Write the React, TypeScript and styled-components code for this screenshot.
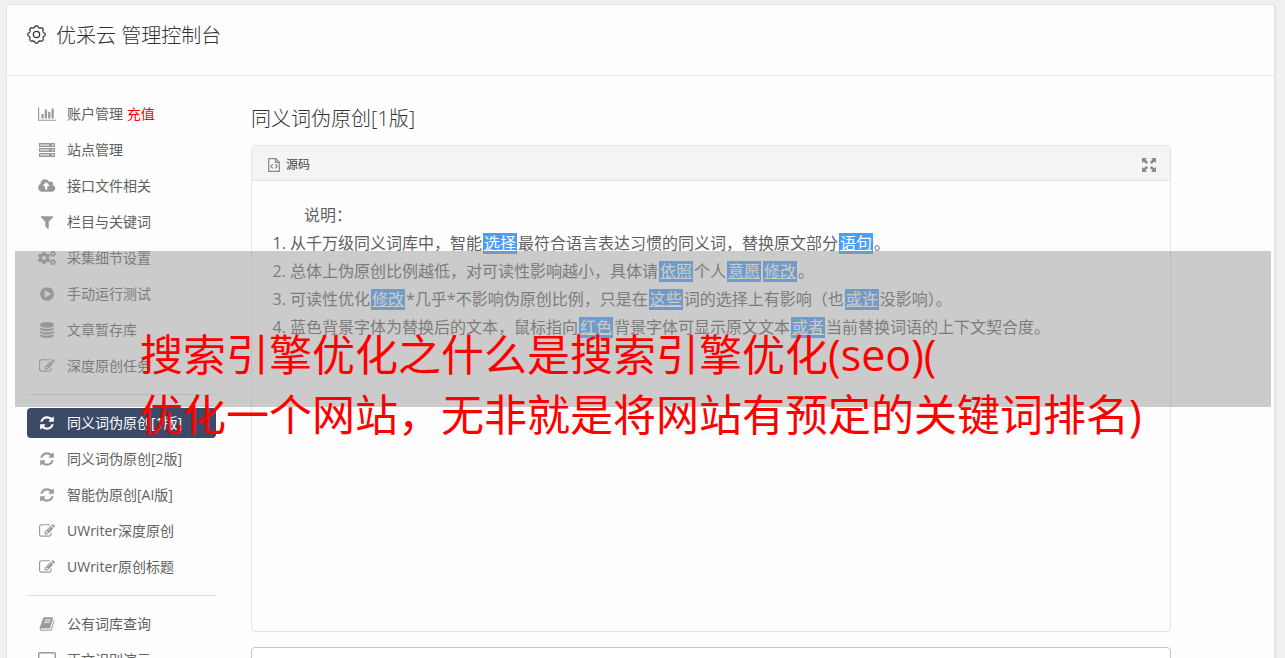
import React from "react";
import styled, { createGlobalStyle } from "styled-components";
import { FaCogs } from "react-icons/fa";

const GlobalStyle = createGlobalStyle`
  *, *::before, *::after { box-sizing: border-box; }
  body {
    margin: 0;
    background: #f0f0f0;
    color: #606060;
    font-family: "Open Sans", "Noto Sans CJK SC", sans-serif;
    font-size: 14px;
    font-weight: 400;
  }
`;

const Page = styled.div`
  position: relative;
  height: 100vh;
  padding: 4px 9px 0 6px;
  overflow: hidden;
`;

const Panel = styled.div`
  min-height: 100%;
  background: #fefefe;
  border: 1px solid #e4e4e4;
  border-right-width: 2px;
  border-radius: 4px 4px 0 0;
`;

const Header = styled.header`
  display: flex;
  align-items: center;
  gap: 10px;
  height: 71px;
  padding: 0 20px 12px;
  border-bottom: 1px solid #e4e4e4;
  color: #333;
`;

const Title = styled.h1`
  margin: 0;
  padding-top: 4px;
  font-size: 20px;
  line-height: 28px;
  font-weight: 300;
`;

const Columns = styled.div`
  display: flex;
  align-items: flex-start;
  padding: 23px 103px 0 20px;
`;

const Sidebar = styled.nav`
  flex: 0 0 189px;
  margin-right: 35px;
`;

const NavGroup = styled.ul`
  display: flex;
  flex-direction: column;
  gap: 6px;
  margin: 0;
  padding: 0;
  list-style: none;

  & + & {
    margin-top: 13px;
    padding-top: 13px;
    border-top: 1px solid #ddd;
  }
`;

const NavLink = styled.a<{ $active?: boolean }>`
  display: flex;
  align-items: center;
  gap: 10px;
  height: 30px;
  padding: 0 10px;
  border-radius: 4px;
  background: ${(p) => (p.$active ? "#3b4a66" : "transparent")};
  color: ${(p) => (p.$active ? "#fff" : "inherit")};
  text-decoration: none;
  white-space: nowrap;

  svg { color: ${(p) => (p.$active ? "#fff" : "#999")}; }
`;

const IconSlot = styled.span`
  display: flex;
  justify-content: center;
  flex: 0 0 20px;
`;

const NavLabel = styled.span`
  padding-bottom: 2px;
`;

const Recharge = styled.span`
  color: #f00;
`;

const Main = styled.main`
  flex: 1;
  min-width: 0;
`;

const SectionTitle = styled.h2`
  margin: 6px 0 12px;
  color: #333;
  font-size: 20px;
  line-height: 28px;
  font-weight: 300;
`;

const Editor = styled.section`
  height: 487px;
  border: 1px solid #e4e4e4;
  border-radius: 4px;
  overflow: hidden;
`;

const Toolbar = styled.div`
  display: flex;
  align-items: center;
  justify-content: space-between;
  height: 35px;
  padding: 3px 14px 0 16px;
  background: #f4f4f4;
  border-bottom: 1px solid #e4e4e4;
`;

const ToolButton = styled.button`
  display: flex;
  align-items: center;
  gap: 6px;
  padding: 0;
  border: 0;
  background: none;
  color: #444;
  font: inherit;
  font-size: 12px;
  line-height: 20px;

  svg { color: #888; }
`;

const Document = styled.div`
  padding: 20px 20px 0;
  font-size: 16px;
  line-height: 28px;
`;

const Intro = styled.p`
  margin: 0;
  text-indent: 2em;
`;

const Notes = styled.ol`
  margin: 0;
  padding-left: 18px;
`;

const Replaced = styled.u`
  display: inline-block;
  margin: 0 1px;
  padding: 0 1px;
  background: #4a9ef5;
  color: #fff;
  line-height: 21px;
`;

const Result = styled.textarea`
  display: block;
  width: 100%;
  height: 120px;
  margin-top: 15px;
  border: 1px solid #c4c4c4;
  border-radius: 4px;
  background: #fff;
  resize: none;
`;

const Band = styled.div`
  position: absolute;
  top: 251px;
  left: 15px;
  right: 14px;
  height: 156px;
  padding: 74px 0 0 125px;
  background: rgba(151, 151, 151, 0.5);
`;

const Caption = styled.p`
  margin: 0;
  color: #f00;
  font-size: 43px;
  line-height: 60px;
  font-weight: 400;
  white-space: nowrap;
`;

type GlyphProps = { d: string; box?: string; width?: number };

const Glyph = ({ d, box = "0 0 1792 1792", width = 16 }: GlyphProps) => (
  <svg viewBox={box} width={width} height={16} fill="currentColor" aria-hidden="true">
    <path d={d} />
  </svg>
);

const PATHS = {
  chart:
    "M640 896v512h-256v-512h256zm384-512v1024h-256v-1024h256zm1024 1152v128h-2048v-1536h128v1408h1920zm-640-896v768h-256v-768h256zm384-384v1152h-256v-1152h256z",
  upload:
    "M1216 864q0-14-9-23l-352-352q-9-9-23-9t-23 9l-351 351q-10 12-10 24 0 14 9 23t23 9h224v352q0 13 9.5 22.5t22.5 9.5h192q13 0 22.5-9.5t9.5-22.5v-352h224q13 0 22.5-9.5t9.5-22.5zm640 288q0 159-112.5 271.5t-271.5 112.5h-1088q-185 0-316.5-131.5t-131.5-316.5q0-130 70-240t188-165q-2-30-2-43 0-212 150-362t362-150q156 0 285.5 87t188.5 231q71-62 166-62 106 0 181 75t75 181q0 76-41 138 130 31 213.5 135.5t83.5 238.5z",
  filter:
    "M1595 295q17 41-14 70l-493 493v742q0 42-39 59-13 5-25 5-27 0-45-19l-256-256q-19-19-19-45v-486l-493-493q-31-29-14-70 17-39 59-39h1280q42 0 59 39z",
  play: "M896 128q209 0 385.5 103t279.5 279.5 103 385.5-103 385.5-279.5 279.5-385.5 103-385.5-103-279.5-279.5-103-385.5 103-385.5 279.5-279.5 385.5-103zm384 823q32-18 32-55t-32-55l-544-320q-31-19-64-1-32 19-32 56v640q0 37 32 56 16 8 32 8 17 0 32-9z",
  database:
    "M896 768q237 0 443-43t325-127v170q0 69-103 128t-280 93.5-385 34.5-385-34.5-280-93.5-103-128v-170q119 84 325 127t443 43zm0 768q237 0 443-43t325-127v170q0 69-103 128t-280 93.5-385 34.5-385-34.5-280-93.5-103-128v-170q119 84 325 127t443 43zm0-384q237 0 443-43t325-127v170q0 69-103 128t-280 93.5-385 34.5-385-34.5-280-93.5-103-128v-170q119 84 325 127t443 43zm0-1152q208 0 385 34.5t280 93.5 103 128v128q0 69-103 128t-280 93.5-385 34.5-385-34.5-280-93.5-103-128v-128q0-69 103-128t280-93.5 385-34.5z",
  edit: "M888 1184l116-116-152-152-116 116v56h96v96h56zm440-720q-16-16-33 1l-350 350q-17 17-1 33t33-1l350-350q17-17 1-33zm80 594v190q0 119-84.5 203.5t-203.5 84.5h-832q-119 0-203.5-84.5t-84.5-203.5v-832q0-119 84.5-203.5t203.5-84.5h832q63 0 117 25 15 7 18 23 3 17-9 29l-49 49q-14 14-32 8-23-6-45-6h-832q-66 0-113 47t-47 113v832q0 66 47 113t113 47h832q66 0 113-47t47-113v-126q0-13 9-22l64-64q15-15 35-7t20 29zm-96-738l288 288-672 672h-288v-288zm444 132l-92 92-288-288 92-92q28-28 68-28t68 28l152 152q28 28 28 68t-28 68z",
  refresh:
    "M1639 1056q0 5-1 7-64 268-268 434.5t-478 166.5q-146 0-282.5-55t-243.5-157l-129 129q-19 19-45 19t-45-19-19-45v-448q0-26 19-45t45-19h448q26 0 45 19t19 45-19 45l-137 137q71 66 161 102t187 36q134 0 250-65t186-179q11-17 53-117 8-23 30-23h192q13 0 22.5 9.5t9.5 22.5zm25-800v448q0 26-19 45t-45 19h-448q-26 0-45-19t-19-45 19-45l138-138q-148-137-349-137-134 0-250 65t-186 179q-11 17-53 117-8 23-30 23h-199q-13 0-22.5-9.5t-9.5-22.5v-7q65-268 270-434.5t480-166.5q146 0 284 55.5t245 156.5l130-129q19-19 45-19t45 19 19 45z",
  book: "M1703 478q40 57 18 129l-275 906q-19 64-76.5 107.5t-122.5 43.5h-923q-77 0-148.5-53.5t-99.5-131.5q-24-67-2-127 0-4 3-27t4-37q1-8-3-21.5t-3-19.5q2-11 8-21t16.5-23.5 16.5-23.5q23-38 45-91.5t30-91.5q3-10 .5-30t-.5-28q3-11 17-28t17-23q21-36 42-92t25-90q1-9-2.5-32t.5-28q4-13 22-30.5t22-22.5q19-26 42.5-84.5t27.5-96.5q1-8-3-25.5t-2-26.5q2-8 9-18t18-23 17-21q8-12 16.5-30.5t15-35 16-36 19.5-32 26.5-23.5 36-11.5 47.5 5.5l-1 3q38-9 51-9h761q74 0 114 56t18 130l-274 906q-36 119-71.5 153.5t-128.5 34.5h-869q-27 0-38 15-11 16-1 43 24 70 144 70h923q29 0 56-15.5t35-41.5l300-987q7-22 5-57 38 15 59 43zm-1064 2q-4 13 2 22.5t20 9.5h608q13 0 25.5-9.5t16.5-22.5l21-64q4-13-2-22.5t-20-9.5h-608q-13 0-25.5 9.5t-16.5 22.5zm-83 256q-4 13 2 22.5t20 9.5h608q13 0 25.5-9.5t16.5-22.5l21-64q4-13-2-22.5t-20-9.5h-608q-13 0-25.5 9.5t-16.5 22.5z",
};

// Outline of a cog with eight rounded teeth around a small hub.
const cogOutline = (() => {
  const points: string[] = [];
  for (let i = 0; i < 160; i++) {
    const a = (i / 160) * Math.PI * 2;
    const r = 7.5 + 0.7 * Math.tanh(2 * Math.cos(8 * a));
    points.push(`${(9 + r * Math.cos(a)).toFixed(2)} ${(9 + r * Math.sin(a)).toFixed(2)}`);
  }
  return `M${points.join("L")}Z`;
})();

const CogIcon = () => (
  <svg viewBox="0 0 18 18" width={19} height={19} fill="none" stroke="currentColor" strokeWidth={1.2} aria-hidden="true">
    <path d={cogOutline} />
    <circle cx={9} cy={9} r={3} />
  </svg>
);

const ServerIcon = () => (
  <svg viewBox="0 0 16 14" width={16} height={14} aria-hidden="true">
    {[0, 5, 10].map((y) => (
      <g key={y}>
        <rect x={0} y={y} width={16} height={4} fill="currentColor" />
        <rect x={1} y={y + 1.2} width={9} height={1.6} fill="#d4d4d4" />
        <rect x={13} y={y + 1.2} width={1.6} height={1.6} fill="#eee" />
      </g>
    ))}
  </svg>
);

const ScreenIcon = () => (
  <svg viewBox="0 0 18 16" width={18} height={16} fill="none" stroke="currentColor" strokeWidth={1.4} aria-hidden="true">
    <rect x={0.7} y={0.7} width={16.6} height={11.6} rx={1} />
    <path d="M5 15h8" />
  </svg>
);

const SourceIcon = () => (
  <svg viewBox="0 0 12 14" width={12} height={14} fill="none" stroke="currentColor" strokeWidth={1.2} aria-hidden="true">
    <path d="M.7.7h7.1l3.5 3.5v9.1H.7zM7.6.9v3.5h3.5" />
    <path d="M4.8 6.2L2.8 8.3l2 2.1M7.2 6.2l2 2.1-2 2.1" />
  </svg>
);

const ExpandIcon = () => (
  <svg viewBox="0 0 14 14" width={14} height={14} fill="currentColor" aria-hidden="true">
    {[0, 90, 180, 270].map((turn) => (
      <path key={turn} transform={`rotate(${turn} 7 7)`} d="M0 0h5L3.4 1.6 6.1 4.3 4.3 6.1 1.6 3.4 0 5z" />
    ))}
  </svg>
);

type Item = { icon: React.ReactNode; label: React.ReactNode; active?: boolean };

const refresh = <Glyph d={PATHS.refresh} />;
const edit = <Glyph d={PATHS.edit} />;

const groups: Item[][] = [
  [
    { icon: <Glyph d={PATHS.chart} box="0 0 2048 1792" width={18} />, label: <>账户管理 <Recharge>充值</Recharge></> },
    { icon: <ServerIcon />, label: "站点管理" },
    { icon: <Glyph d={PATHS.upload} box="0 0 1856 1792" width={18} />, label: "接口文件相关" },
    { icon: <Glyph d={PATHS.filter} />, label: "栏目与关键词" },
    { icon: <FaCogs size={18} />, label: "采集细节设置" },
    { icon: <Glyph d={PATHS.play} />, label: "手动运行测试" },
    { icon: <Glyph d={PATHS.database} />, label: "文章暂存库" },
    { icon: edit, label: "深度原创任务" },
  ],
  [
    { icon: refresh, label: "同义词伪原创[1版]", active: true },
    { icon: refresh, label: "同义词伪原创[2版]" },
    { icon: refresh, label: "智能伪原创[AI版]" },
    { icon: edit, label: "UWriter深度原创" },
    { icon: edit, label: "UWriter原创标题" },
  ],
  [
    { icon: <Glyph d={PATHS.book} />, label: "公有词库查询" },
    { icon: <ScreenIcon />, label: "正文识别演示" },
  ],
];

export default function App() {
  return (
    <Page>
      <GlobalStyle />
      <Panel>
        <Header>
          <CogIcon />
          <Title>优采云 管理控制台</Title>
        </Header>
        <Columns>
          <Sidebar>
            {groups.map((items, g) => (
              <NavGroup key={g}>
                {items.map((item, i) => (
                  <li key={i}>
                    <NavLink href="#" $active={item.active}>
                      <IconSlot>{item.icon}</IconSlot>
                      <NavLabel>{item.label}</NavLabel>
                    </NavLink>
                  </li>
                ))}
              </NavGroup>
            ))}
          </Sidebar>
          <Main>
            <SectionTitle>同义词伪原创[1版]</SectionTitle>
            <Editor>
              <Toolbar>
                <ToolButton type="button"><SourceIcon />源码</ToolButton>
                <ToolButton type="button" aria-label="全屏"><ExpandIcon /></ToolButton>
              </Toolbar>
              <Document>
                <Intro>说明：</Intro>
                <Notes>
                  <li>从千万级同义词库中，智能<Replaced>选择</Replaced>最符合语言表达习惯的同义词，替换原文部分<Replaced>语句</Replaced>。</li>
                  <li>总体上伪原创比例越低，对可读性影响越小，具体请<Replaced>依照</Replaced>个人<Replaced>意愿</Replaced><Replaced>修改</Replaced>。</li>
                  <li>可读性优化<Replaced>修改</Replaced>*几乎*不影响伪原创比例，只是在<Replaced>这些</Replaced>词的选择上有影响（也<Replaced>或许</Replaced>没影响）。</li>
                  <li>蓝色背景字体为替换后的文本，鼠标指向<Replaced>红色</Replaced>背景字体可显示原文文本<Replaced>或者</Replaced>当前替换词语的上下文契合度。</li>
                </Notes>
              </Document>
            </Editor>
            <Result aria-label="原文内容" />
          </Main>
        </Columns>
      </Panel>
      <Band>
        <Caption>
          搜索引擎优化之什么是搜索引擎优化(seo)(
          <br />
          优化一个网站，无非就是将网站有预定的关键词排名)
        </Caption>
      </Band>
    </Page>
  );
}
